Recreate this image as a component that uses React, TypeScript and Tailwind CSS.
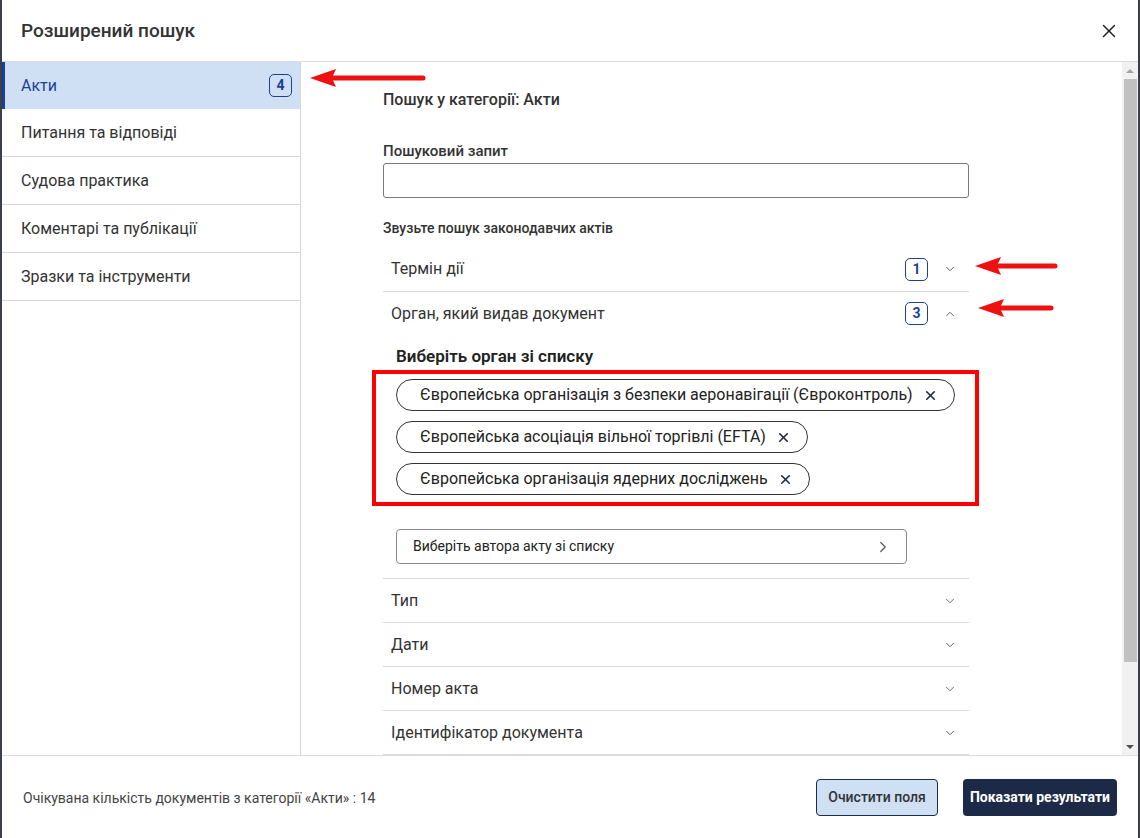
import { X, ChevronDown, ChevronUp, ChevronRight } from "lucide-react";

const sideItems = ["Питання та відповіді", "Судова практика", "Коментарі та публікації", "Зразки та інструменти"];
const chips = [
  "Європейська організація з безпеки аеронавігації (Євроконтроль)",
  "Європейська асоціація вільної торгівлі (EFTA)",
  "Європейська організація ядерних досліджень",
];
const moreRows = ["Тип", "Дати", "Номер акта", "Ідентифікатор документа"];

function Badge({ n }: { n: number }) {
  return (
    <span className="flex h-[23px] w-[23px] items-center justify-center rounded-[5px] border border-[#1d3f94] text-[14px] font-bold text-[#1d3f94]">
      {n}
    </span>
  );
}

function RedArrow({ className, length }: { className: string; length: number }) {
  return (
    <svg className={className} width={length} height={26} viewBox={`0 0 ${length} 26`}>
      <path d={`M24 13 H${length - 3}`} stroke="#ee1111" strokeWidth={5} strokeLinecap="round" />
      <path d="M0 13 L26 4 L22 13 L26 22 Z" fill="#ee1111" />
    </svg>
  );
}

export default function App() {
  return (
    <div className="h-[838px] w-[1140px] overflow-hidden bg-[#3a3f4a] px-[2px]" style={{ fontFamily: "Roboto, 'Noto Sans', sans-serif" }}>
      <div className="relative flex h-full flex-col bg-white text-[#333]">
        {/* header */}
        <div className="flex h-[62px] shrink-0 items-center justify-between border-b border-[#dcdcdc] pl-[19px] pr-[18px]">
          <h2 className="mt-[2px] text-[19px] font-medium text-[#333]">Розширений пошук</h2>
          <X size={22} strokeWidth={1.6} className="text-[#222]" />
        </div>

        {/* body */}
        <div className="flex min-h-0 flex-1">
          <aside className="w-[299px] shrink-0 border-r border-[#d6d6d6]">
            <div className="flex h-[47px] items-center justify-between border-l-[3px] border-[#1d3f94] bg-[#cfe0f5] pl-[16px] pr-[8px]">
              <span className="text-[16px] text-[#1d3f94]">Акти</span>
              <Badge n={4} />
            </div>
            {sideItems.map((s) => (
              <div key={s} className="flex h-[48px] items-center border-b border-[#d6d6d6] pl-[19px] text-[16px] text-[#333]">
                {s}
              </div>
            ))}
          </aside>

          <main className="relative min-w-0 flex-1 overflow-hidden">
            <div className="ml-[82px] w-[586px] pt-[26px]">
              <h3 className="text-[16px] font-medium text-[#333]">Пошук у категорії: Акти</h3>

              <label className="mt-[28px] block text-[15px] font-medium text-[#333]">Пошуковий запит</label>
              <div className="mt-0 h-[35px] w-full rounded-[3px] border border-[#7a7a7a]" />

              <p className="mt-[20px] text-[14px] font-medium text-[#333]">Звузьте пошук законодавчих актів</p>

              <div className="mt-[9px] flex h-[44px] items-center justify-between border-b border-[#dcdcdc] pl-[8px] pr-[12px]">
                <span className="text-[16px] text-[#333]">Термін дії</span>
                <div className="flex items-center gap-[15px]">
                  <Badge n={1} />
                  <ChevronDown size={14} strokeWidth={1.5} className="text-[#555]" />
                </div>
              </div>
              <div className="flex h-[44px] items-center justify-between pl-[8px] pr-[12px]">
                <span className="text-[16px] text-[#333]">Орган, який видав документ</span>
                <div className="flex items-center gap-[15px]">
                  <Badge n={3} />
                  <ChevronUp size={14} strokeWidth={1.5} className="text-[#555]" />
                </div>
              </div>

              <div className="pl-[13px]">
                <p className="mt-[8px] text-[17px] font-semibold text-[#222]">Виберіть орган зі списку</p>
                <div className="mt-[1px] ml-[-24px] w-[607px] border-4 border-[#ff0000] px-[20px] pt-[5px] pb-[7px]">
                  <div className="flex flex-col items-start gap-[10px]">
                    {chips.map((c) => (
                      <span key={c} className="flex h-[32px] items-center gap-[10px] rounded-full border border-[#333] pl-[23px] pr-[16px] text-[16px] text-[#222]">
                        {c}
                        <X size={15} strokeWidth={2.6} className="text-[#1d2a48]" />
                      </span>
                    ))}
                  </div>
                </div>

                <div className="mt-[23px] flex h-[35px] w-[511px] items-center justify-between rounded-[4px] border border-[#8a8a8a] pl-[16px] pr-[14px]">
                  <span className="text-[14px] text-[#222]">Виберіть автора акту зі списку</span>
                  <ChevronRight size={18} strokeWidth={1.6} className="text-[#555]" />
                </div>
              </div>

              <div className="mt-[14px] border-t border-[#dcdcdc]">
                {moreRows.map((r) => (
                  <div key={r} className="flex h-[44px] items-center justify-between border-b border-[#dcdcdc] pl-[8px] pr-[12px]">
                    <span className="text-[16px] text-[#333]">{r}</span>
                    <ChevronDown size={14} strokeWidth={1.5} className="text-[#555]" />
                  </div>
                ))}
                <div className="h-[44px]" />
              </div>
            </div>

            <RedArrow className="absolute left-[9px] top-[3px]" length={116} />
            <RedArrow className="absolute left-[674px] top-[191px]" length={83} />
            <RedArrow className="absolute left-[677px] top-[233px]" length={76} />
          </main>

          {/* scrollbar */}
          <div className="flex w-[16px] shrink-0 flex-col items-center bg-[#f1f1f1]">
            <div className="flex h-[17px] items-center justify-center">
              <div className="h-0 w-0 border-x-[4px] border-b-[4px] border-x-transparent border-b-[#a3a3a3]" />
            </div>
            <div className="h-[583px] w-[13px] bg-[#c1c1c1]" />
            <div className="flex-1" />
            <div className="flex h-[17px] items-center justify-center">
              <div className="h-0 w-0 border-x-[4px] border-t-[4px] border-x-transparent border-t-[#505050]" />
            </div>
          </div>
        </div>

        {/* footer */}
        <div className="flex h-[83px] shrink-0 items-center justify-between border-t border-[#dcdcdc] pl-[21px] pr-[21px]">
          <span className="mt-[2px] text-[14px] text-[#444]">Очікувана кількість документів з категорії «Акти» : 14</span>
          <div className="flex items-center gap-[25px]">
            <button className="h-[37px] rounded-[4px] border border-[#1d2a48] bg-[#cfe0f5] px-[11px] text-[14px] font-medium text-[#333]">
              Очистити поля
            </button>
            <button className="h-[37px] rounded-[4px] bg-[#1c2a48] px-[7px] text-[14px] font-bold text-white">
              Показати результати
            </button>
          </div>
        </div>
      </div>
    </div>
  );
}
